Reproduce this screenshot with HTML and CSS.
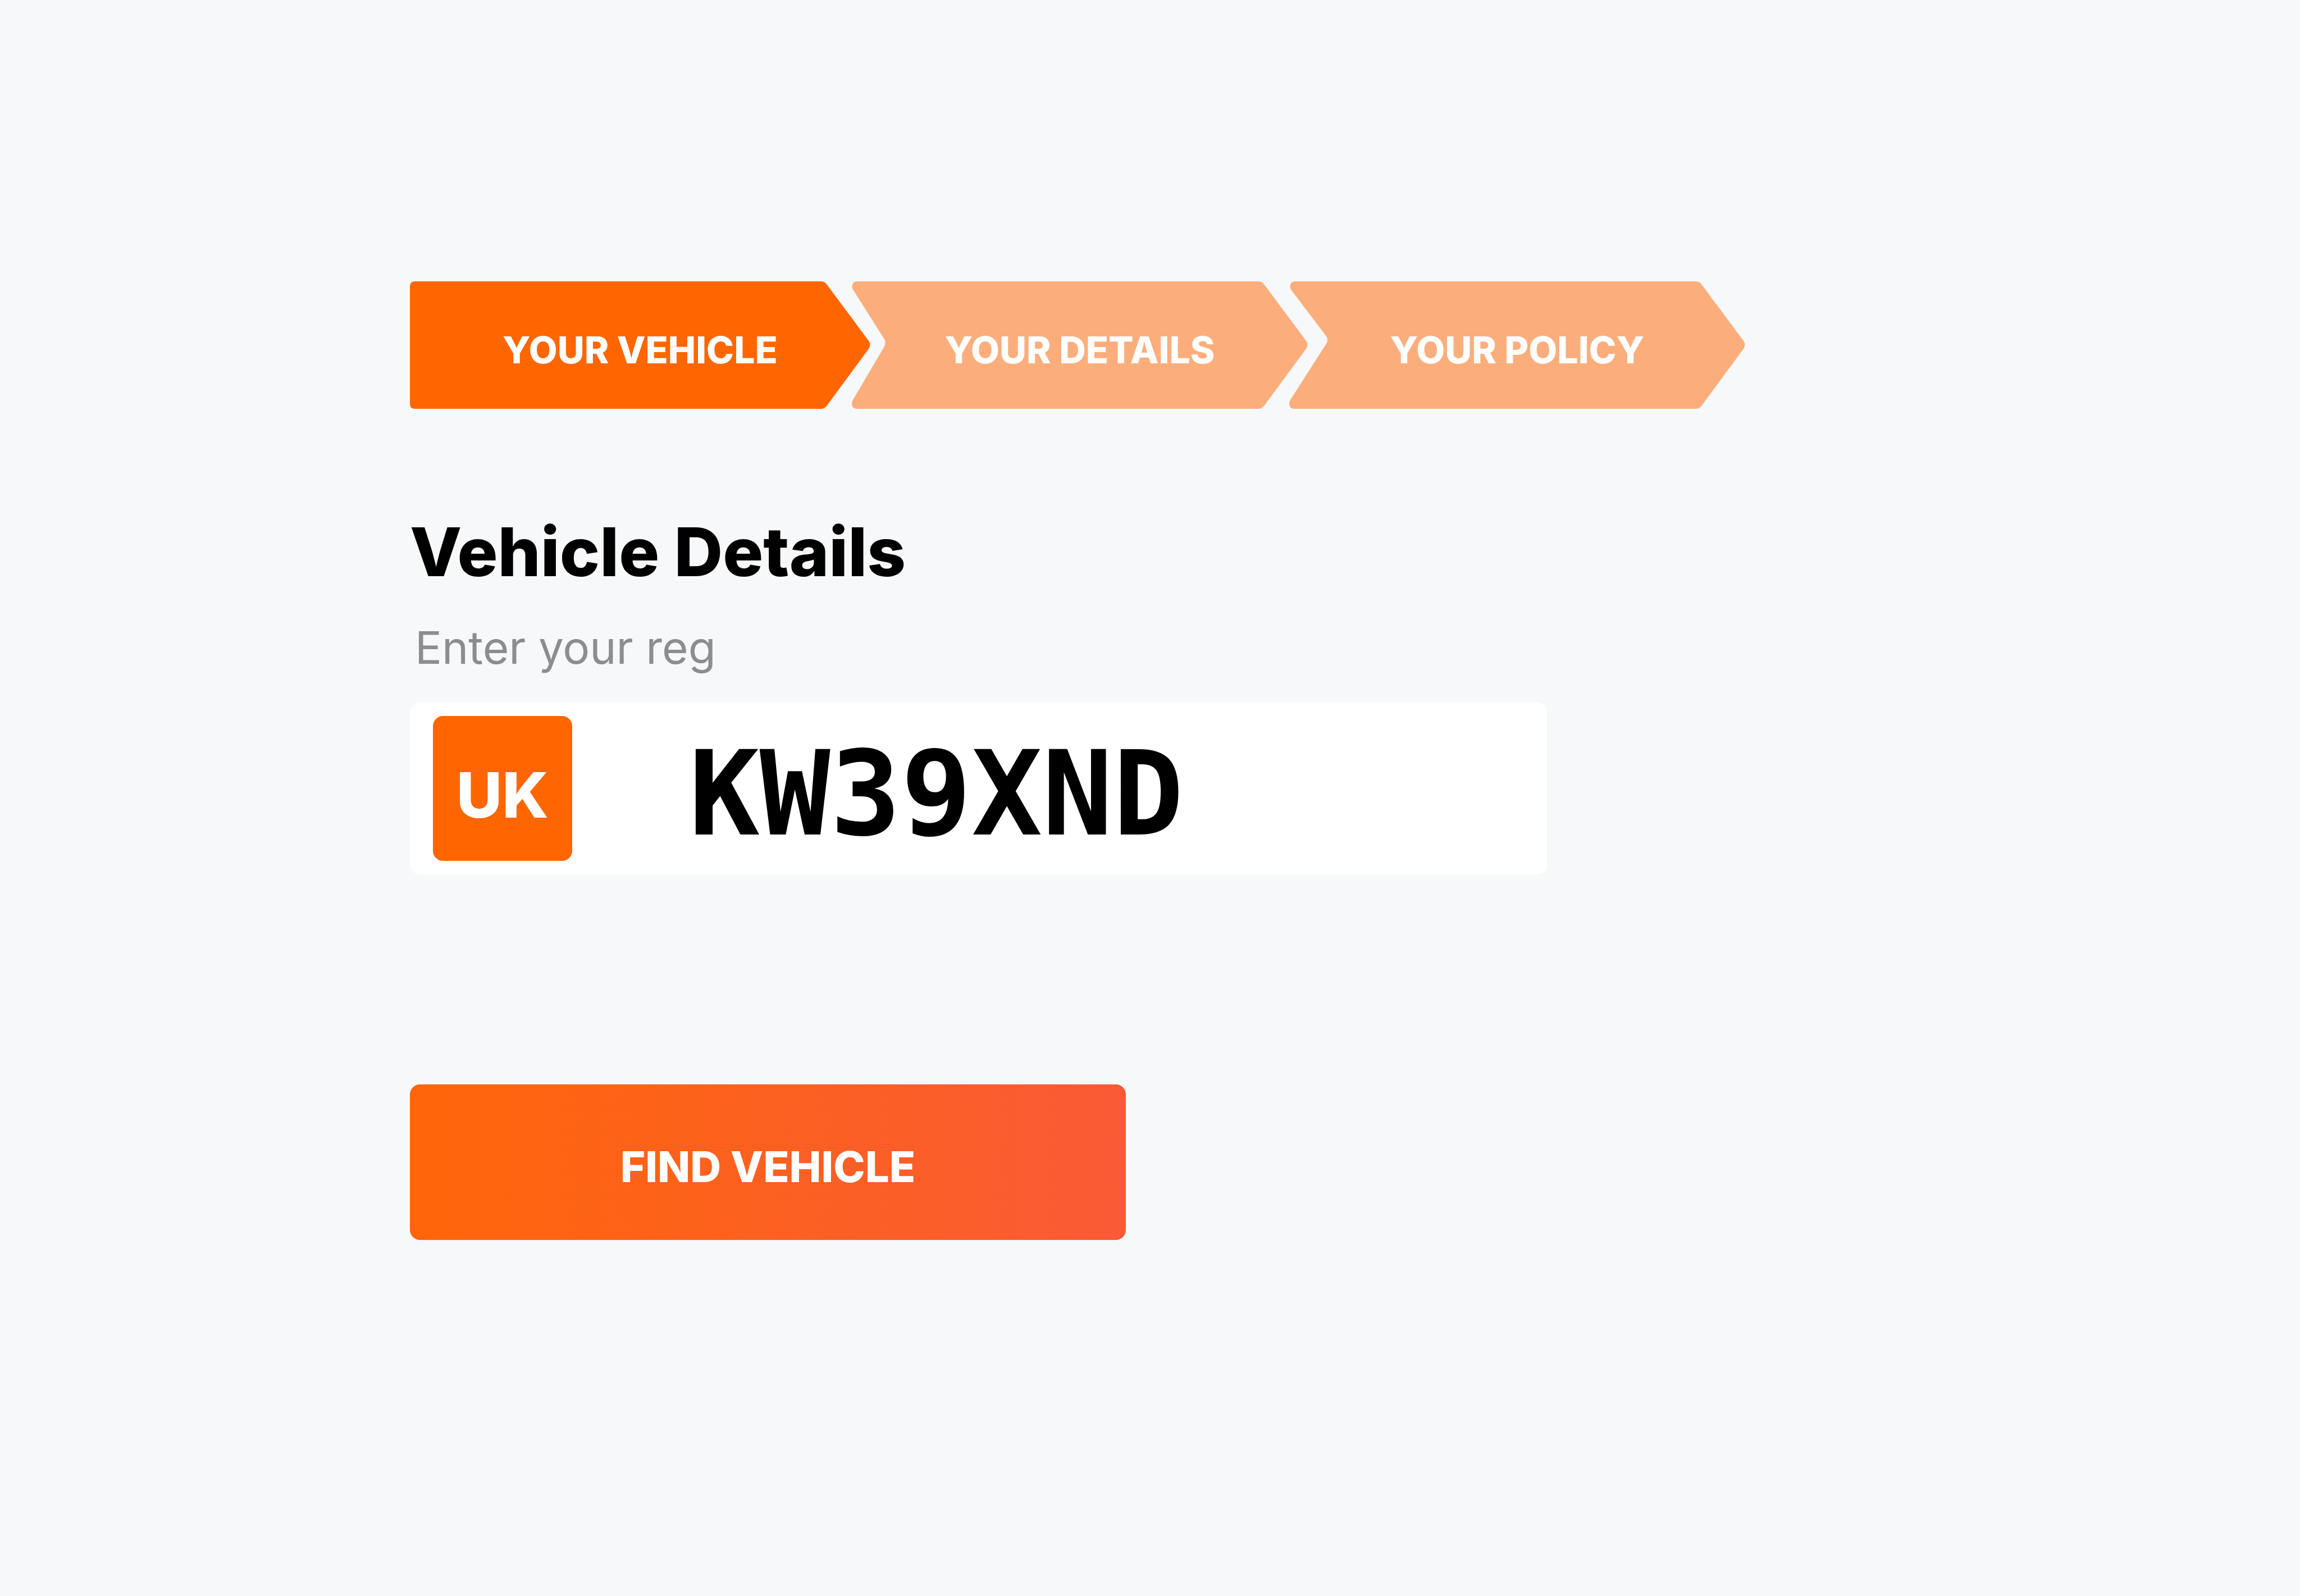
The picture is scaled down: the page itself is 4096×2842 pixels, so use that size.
FILE: index.html
```html
<!DOCTYPE html>
<html lang="en">
<head>
<meta charset="utf-8">
<meta name="viewport" content="width=device-width, initial-scale=1">
<title>Vehicle Details</title>
<link rel="stylesheet" href="styles.css">
</head>
<body>
<main class="page">
  <ol class="steps">
    <li class="step step-first" aria-current="step">
      <svg class="step-shape" viewBox="0 0 820 226" preserveAspectRatio="none" aria-hidden="true"><path d="M9 0H731Q738 0 742 5L816 104Q823 112 816 121L742 221Q738 226 731 226H9Q0 226 0 217V9Q0 0 9 0Z"/></svg>
      <span class="step-label">YOUR VEHICLE</span>
    </li>
    <li class="step">
      <svg class="step-shape" viewBox="0 0 812 226" preserveAspectRatio="none" aria-hidden="true"><path d="M9 0H723Q730 0 734 5L808 104Q815 112 808 121L734 221Q730 226 723 226H9C0 226 -2 217 2 210L57 117Q62 109 57 101L3 16C-2 9 1 0 9 0Z"/></svg>
      <span class="step-label">YOUR DETAILS</span>
    </li>
    <li class="step">
      <svg class="step-shape" viewBox="0 0 812 226" preserveAspectRatio="none" aria-hidden="true"><path d="M10 0H723Q730 0 734 5L808 104Q815 112 808 121L734 221Q730 226 723 226H9C0 226 -2 217 2 210L65 112Q71 104 65 96L4 16C-1 9 2 0 10 0Z"/></svg>
      <span class="step-label">YOUR POLICY</span>
    </li>
  </ol>

  <form class="form">
    <h1 class="title">Vehicle Details</h1>
    <label class="label" for="reg">Enter your reg</label>
    <div class="plate">
      <span class="country">UK</span>
      <input class="reg" id="reg" name="reg" type="text" value="KW39XND" autocomplete="off" spellcheck="false">
    </div>
    <button class="submit" type="button">FIND VEHICLE</button>
  </form>
</main>
</body>
</html>
```
FILE: styles.css
```css
*,
*::before,
*::after {
  box-sizing: border-box;
}

body {
  margin: 0;
  background: #f7f8fa;
  color: #000;
  font-family: Inter, "Liberation Sans", sans-serif;
}

.page {
  padding: 501px 17.82%;
}

/* Progress steps */
.steps {
  display: flex;
  max-width: 2378px;
  margin: 0;
  padding: 0;
  list-style: none;
}

.step {
  position: relative;
  display: flex;
  flex: 812 1 0;
  align-items: center;
  justify-content: center;
  height: 227px;
  margin-left: -33px;
  padding-top: 17px;
  color: #fff;
  fill: #fbae7c;
}

.step-first {
  flex-grow: 820;
  margin-left: 0;
  fill: #ff6600;
}

.step-shape {
  position: absolute;
  inset: 0;
  width: 100%;
  height: 100%;
}

.step-label {
  position: relative;
  font-size: 66px;
  font-weight: 800;
  line-height: 80px;
}

/* Vehicle form */
.form {
  display: flex;
  flex-direction: column;
  align-items: flex-start;
}

.title {
  margin: 183px 0 50px;
  font-size: 120px;
  font-weight: 800;
  line-height: 144px;
}

.label {
  padding-left: 9px;
  color: #8c8d8f;
  font-size: 80px;
  line-height: 96px;
}

.plate {
  display: flex;
  align-items: center;
  gap: 208px;
  width: 100%;
  max-width: 2025px;
  margin-top: 50px;
  padding: 24px 41px;
  border-radius: 18px;
  background: #fff;
}

.country {
  display: flex;
  flex: none;
  align-items: center;
  justify-content: center;
  width: 248px;
  height: 258px;
  padding-top: 22px;
  border-radius: 18px;
  background: #ff6600;
  color: #fff;
  font-size: 112px;
  font-weight: 800;
  line-height: 132px;
}

.reg {
  flex: 1;
  min-width: 0;
  height: 258px;
  padding: 18px 0 0;
  border: 0;
  outline: 0;
  background: none;
  color: #000;
  font: 700 209px/240px "DejaVu Sans Mono", monospace;
}

.submit {
  width: 100%;
  max-width: 1275px;
  height: 277px;
  margin-top: 374px;
  padding: 15px 0 0;
  border: 0;
  border-radius: 18px;
  background: linear-gradient(90deg, #ff660a, #fc5f24 60%, #fa5a36);
  color: #fff;
  font: 800 76px/96px Inter, "Liberation Sans", sans-serif;
  cursor: pointer;
}
```
